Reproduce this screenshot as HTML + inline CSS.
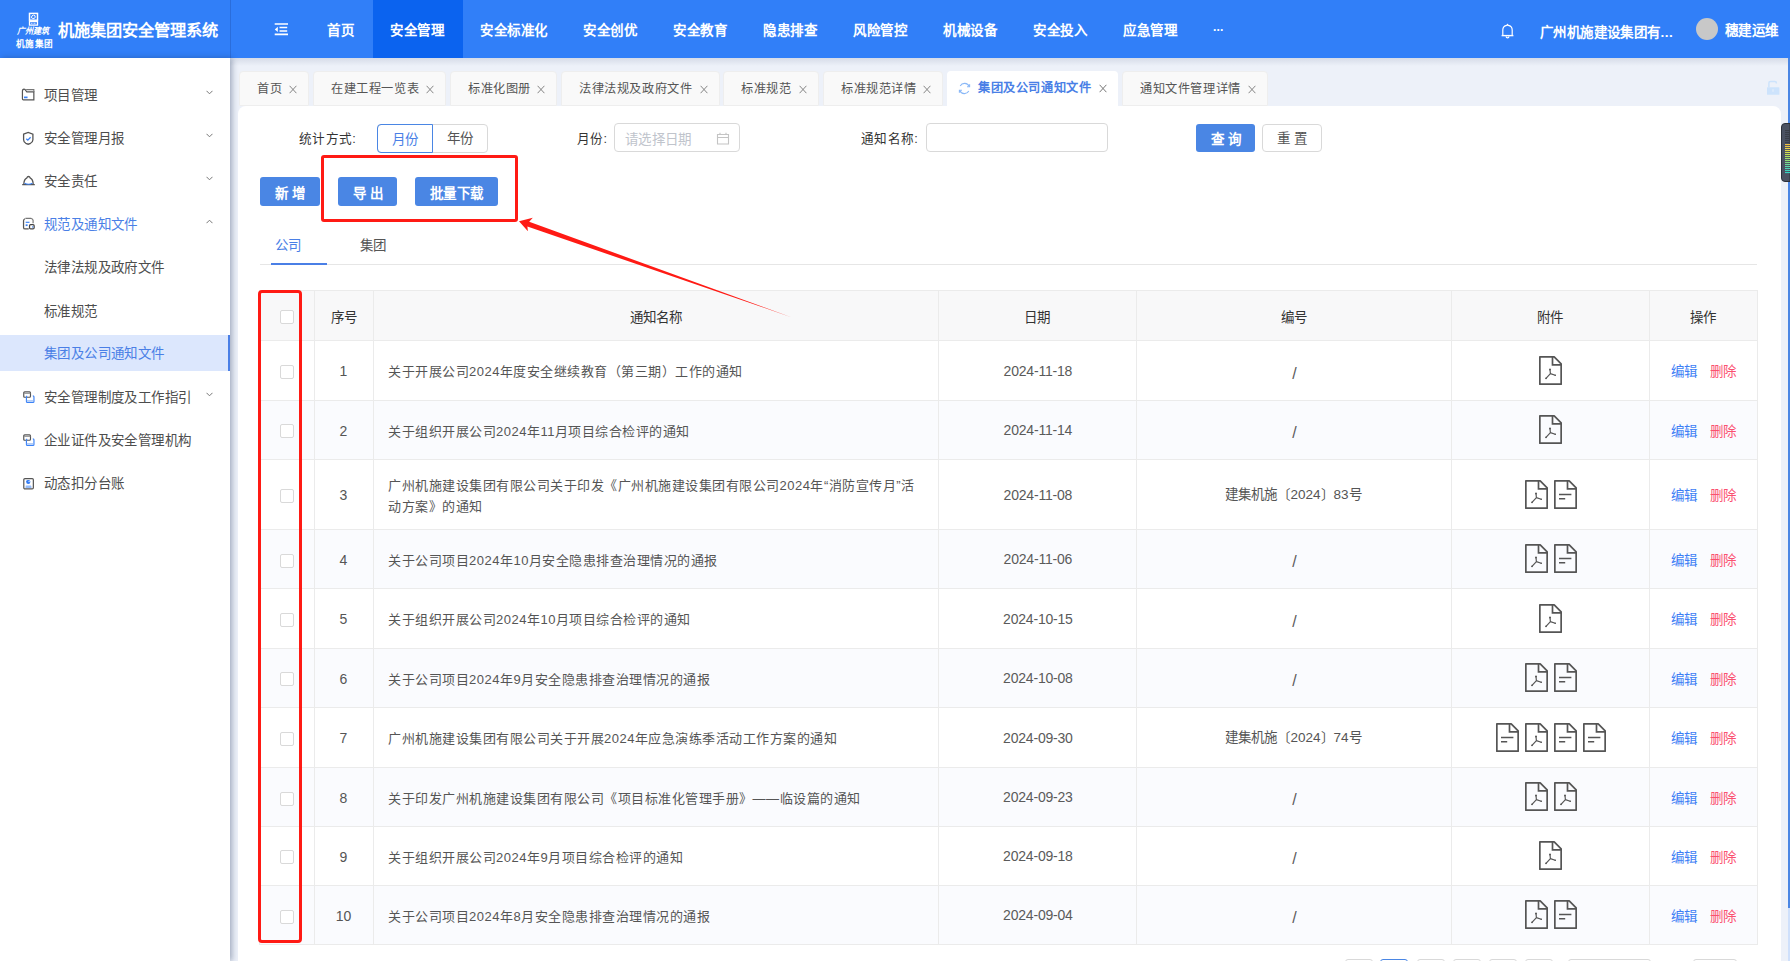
<!DOCTYPE html>
<html lang="zh-CN">
<head>
<meta charset="utf-8">
<style>
*{box-sizing:border-box;margin:0;padding:0}
html,body{width:1790px;height:961px;overflow:hidden;background:#edf1f9;font-family:"Liberation Sans",sans-serif;color:#333}
.abs{position:absolute}
#hdr{position:absolute;left:0;top:0;width:1790px;height:58px;background:#317ff8;color:#fff}
#logo{position:absolute;left:0;top:0;width:230px;height:58px}
#hdr .title{position:absolute;left:58px;top:17px;font-size:16.2px;font-weight:bold;line-height:26px;white-space:nowrap}
.nav{position:absolute;top:0;height:58px;line-height:62px;font-size:13.5px;font-weight:bold;white-space:nowrap}
.nav.act{background:#0d64f0}
#side{position:absolute;left:0;top:58px;width:230px;height:903px;background:#fff;box-shadow:2px 0 6px rgba(30,50,90,.38)}
.si{position:absolute;left:0;width:230px;height:36px;line-height:36px;font-size:13.5px;color:#4d4d4d;white-space:nowrap;letter-spacing:.4px}
.si .t{position:absolute;left:44px;top:1px}
.si svg{position:absolute}
.chev{position:absolute;left:206px;width:7px;height:5px}
.tab{position:absolute;top:71px;height:35px;background:#f9f9f9;border:1px solid #eeeeee;border-radius:4px 4px 0 0;font-size:12.2px;letter-spacing:.6px;color:#555;line-height:36px;white-space:nowrap}
.tab .t{position:absolute;left:17px;top:-1px}
.tab .x{position:absolute;right:11px;top:13px;width:8px;height:9px}
#card{position:absolute;left:238px;top:106px;width:1543px;height:900px;background:#fff;border-radius:8px}
.lbl{position:absolute;font-size:12.6px;color:#333;white-space:nowrap;line-height:22px;letter-spacing:.3px}
.btn{position:absolute;background:#4a86e4;color:#fff;border-radius:3px;font-size:13.5px;font-weight:bold;text-align:center;white-space:nowrap}
.th{position:absolute;font-size:13.5px;color:#333;white-space:nowrap;line-height:20px;text-align:center;font-weight:500}
.td{position:absolute;font-size:13.5px;color:#555;white-space:nowrap;line-height:20px;text-align:center}
.cb{position:absolute;width:14px;height:14px;border:1px solid #d9d9d9;border-radius:2px;background:#fff}
</style>
</head>
<body>
<div id="hdr">
  <div id="logo">
    <svg class="abs" style="left:28px;top:12px" width="11" height="14" viewBox="0 0 11 14"><rect x="1.5" y="1.4" width="8" height="6.8" fill="none" stroke="#fff" stroke-width="1.5"/><path d="M3.5 6.2Q3.2 3.2 5.6 3Q7.6 3 7.2 5.6Q6.4 6.8 4.2 6.4" fill="none" stroke="#fff" stroke-width="1"/><rect x="1.5" y="9.5" width="8" height="3.6" fill="none" stroke="#fff" stroke-width="1.3"/><path d="M3 11.3H8" stroke="#cfe0ff" stroke-width="1" stroke-dasharray="1 .5"/></svg>
    <div class="abs" style="left:17px;top:25.5px;font-size:8px;font-style:italic;font-weight:bold;line-height:12px;white-space:nowrap;transform:scaleY(1.1)">广州建筑</div>
    <div class="abs" style="left:16px;top:38px;font-size:8.6px;font-weight:bold;line-height:12px;letter-spacing:.4px;white-space:nowrap">机施集团</div>
    <div class="title">机施集团安全管理系统</div>
  </div>
  <div class="abs" style="left:230px;top:0;width:1px;height:58px;background:#2a6ddb"></div>
  <svg class="abs" style="left:274px;top:23px" width="15" height="13" viewBox="0 0 15 13"><path d="M.7 1H14M5.5 4.5H13.2M5.5 8H13.2M.7 11.4H14" stroke="#fff" stroke-width="1.6"/><path d="M3.8 3.8V9L.8 6.4Z" fill="#fff"/></svg>
  <svg class="abs" style="left:1501px;top:23px" width="13" height="16" viewBox="0 0 13 16"><path d="M6.5 1.3L7.2 2.3Q11.2 2.9 11.2 7V12.5H1.8V7Q1.8 2.9 5.8 2.3Z" fill="none" stroke="#fff" stroke-width="1.2" stroke-linejoin="round"/><path d="M.6 12.6H12.4" stroke="#fff" stroke-width="1.4"/><path d="M5 13.4Q5.2 14.9 6.6 14.9Q7.9 14.9 8 13.4" fill="none" stroke="#fff" stroke-width="1.1"/></svg>
  <div class="abs" style="left:373px;top:0;width:90px;height:58px;background:#0b63ef"></div>
  <div class="nav" style="left:327px;letter-spacing:.5px">首页</div>
  <div class="nav" style="left:390px;letter-spacing:.5px">安全管理</div>
  <div class="nav" style="left:480px;letter-spacing:.5px">安全标准化</div>
  <div class="nav" style="left:583px;letter-spacing:.5px">安全创优</div>
  <div class="nav" style="left:673px;letter-spacing:.5px">安全教育</div>
  <div class="nav" style="left:763px;letter-spacing:.5px">隐患排查</div>
  <div class="nav" style="left:853px;letter-spacing:.5px">风险管控</div>
  <div class="nav" style="left:943px;letter-spacing:.5px">机械设备</div>
  <div class="nav" style="left:1033px;letter-spacing:.5px">安全投入</div>
  <div class="nav" style="left:1123px;letter-spacing:.5px">应急管理</div>
  <div class="nav" style="left:1213px;font-size:12px;line-height:60px;letter-spacing:-.5px">···</div>
  <div class="abs" style="left:1540px;top:20px;letter-spacing:.4px;font-size:13.5px;font-weight:bold;line-height:26px;white-space:nowrap">广州机施建设集团有...</div>
  <div class="abs" style="left:1696px;top:18px;width:22px;height:22px;border-radius:50%;background:#c8c8c8"></div>
  <div class="abs" style="left:1725px;top:17.5px;letter-spacing:.4px;font-size:13.5px;font-weight:bold;line-height:26px;white-space:nowrap">穗建运维</div>
</div>
<div id="side">
  <div class="si" style="top:19px"><svg style="left:21.3px;top:11.4px" width="14" height="13" viewBox="0 0 15 14"><path d="M1.5 3.5Q1.5 1.2 3.2 1.2Q4.5 1.2 5.5 3.2L6.2 4.2H13.8V12.8H2.5Q1.5 12.8 1.5 11.5Z" fill="none" stroke="#555" stroke-width="1.3"/><path d="M5.5 1.8H13.8V4.2" fill="none" stroke="#777" stroke-width="1.2"/><rect x="3.2" y="9.2" width="3.8" height="1.8" fill="#3b82f6"/></svg><span class="t">项目管理</span><svg class="chev" style="top:13px" viewBox="0 0 7 5"><path d="M.5 .8L3.5 3.8L6.5 .8" fill="none" stroke="#777" stroke-width="1"/></svg></div>
  <div class="si" style="top:62px"><svg style="left:22px;top:11px" width="13" height="14" viewBox="0 0 13 14"><path d="M1.6 3.2L6.2 1.5L10.9 3.2V8.8Q10.9 11 8.5 12.3L6.2 13.2L3.8 12.3Q1.6 11 1.6 8.8Z" fill="none" stroke="#555" stroke-width="1.3"/><path d="M4.3 7.8L5.8 9.2L8.6 6.2" fill="none" stroke="#3b82f6" stroke-width="1.3"/></svg><span class="t">安全管理月报</span><svg class="chev" style="top:13px" viewBox="0 0 7 5"><path d="M.5 .8L3.5 3.8L6.5 .8" fill="none" stroke="#777" stroke-width="1"/></svg></div>
  <div class="si" style="top:105px"><svg style="left:21px;top:12px" width="15" height="12" viewBox="0 0 15 12"><path d="M1.2 9.6H13.8M2.8 9.4Q3 4.4 5.6 3.2Q6.4 1.5 7.5 1.5Q8.6 1.5 9.4 3.2Q12 4.4 12.2 9.4" fill="none" stroke="#555" stroke-width="1.3"/><path d="M3.6 8.3Q7.5 10.2 11.4 8.3" fill="none" stroke="#3b82f6" stroke-width="1.2"/></svg><span class="t">安全责任</span><svg class="chev" style="top:13px" viewBox="0 0 7 5"><path d="M.5 .8L3.5 3.8L6.5 .8" fill="none" stroke="#777" stroke-width="1"/></svg></div>
  <div class="si" style="top:148px;color:#4a7fe6"><svg style="left:22px;top:11px" width="13.5" height="13.5" viewBox="0 0 14 14"><path d="M3.2 1.8Q1.6 2.2 1.6 4V10.8Q1.6 12.4 3.2 12.4H7" fill="none" stroke="#555" stroke-width="1.3"/><path d="M3.5 1.5H9.5Q11.3 1.8 11.5 3.5V6.5" fill="none" stroke="#777" stroke-width="1.2"/><path d="M3.8 5.5H7.8" stroke="#3b82f6" stroke-width="1.2"/><rect x="3.8" y="7.6" width="2" height="1.8" fill="#3b82f6"/><rect x="7.8" y="7.8" width="4.8" height="4.6" rx="1.2" fill="#fff" stroke="#444" stroke-width="1.3"/><rect x="10.6" y="9.5" width="1" height="1.6" fill="#3b82f6"/></svg><span class="t">规范及通知文件</span><svg class="chev" style="top:13px" viewBox="0 0 7 5"><path d="M.5 4.2L3.5 1.2L6.5 4.2" fill="none" stroke="#777" stroke-width="1"/></svg></div>
  <div class="si" style="top:191px"><span class="t">法律法规及政府文件</span></div>
  <div class="si" style="top:235px"><span class="t">标准规范</span></div>
  <div class="si" style="top:277px;background:#dce7fd;color:#4a7fe6"><span class="t">集团及公司通知文件</span><div class="abs" style="left:228px;top:0;width:2px;height:36px;background:#4a7fe6"></div></div>
  <div class="si" style="top:321px"><svg style="left:22px;top:11px" width="13.5" height="13.5" viewBox="0 0 14 14"><path d="M1.8 6.5V3Q1.8 2 2.8 2H7.8Q8.8 2 8.8 3V6.5Q8.8 7.5 7.8 7.5H2.8Q1.8 7.5 1.8 6.5Z" fill="none" stroke="#555" stroke-width="1.2"/><path d="M2 3.6H8.6" stroke="#999" stroke-width="1"/><path d="M5.3 6.1Q4.6 6.6 4.6 7.8V11.9Q4.6 12.9 5.6 12.9H11.4Q12.4 12.9 12.4 11.9V7.1Q12.4 6.1 11.2 6.1" fill="none" stroke="#3b82f6" stroke-width="1.2"/><path d="M4.8 11.2H12.2" stroke="#8fb5f6" stroke-width="1"/></svg><span class="t">安全管理制度及工作指引</span><svg class="chev" style="top:13px" viewBox="0 0 7 5"><path d="M.5 .8L3.5 3.8L6.5 .8" fill="none" stroke="#777" stroke-width="1"/></svg></div>
  <div class="si" style="top:364px"><svg style="left:22px;top:11px" width="13.5" height="13.5" viewBox="0 0 14 14"><path d="M1.8 6.5V3Q1.8 2 2.8 2H7.8Q8.8 2 8.8 3V6.5Q8.8 7.5 7.8 7.5H2.8Q1.8 7.5 1.8 6.5Z" fill="none" stroke="#555" stroke-width="1.2"/><path d="M2 3.6H8.6" stroke="#999" stroke-width="1"/><path d="M5.3 6.1Q4.6 6.6 4.6 7.8V11.9Q4.6 12.9 5.6 12.9H11.4Q12.4 12.9 12.4 11.9V7.1Q12.4 6.1 11.2 6.1" fill="none" stroke="#3b82f6" stroke-width="1.2"/><path d="M4.8 11.2H12.2" stroke="#8fb5f6" stroke-width="1"/></svg><span class="t">企业证件及安全管理机构</span></div>
  <div class="si" style="top:407px"><svg style="left:22px;top:12px" width="12.5" height="13" viewBox="0 0 13 14"><rect x="1.7" y="1.7" width="10.3" height="11" rx="1.2" fill="none" stroke="#555" stroke-width="1.3"/><path d="M4.2 4.8Q4.2 3.2 6.6 3.2Q8.8 3.2 8.8 5.2Q8.8 7.6 6.6 7.6Q4.2 7.6 4.2 4.8Z" fill="#2f7af5"/><circle cx="7.4" cy="4.9" r=".7" fill="#fff"/><path d="M3.8 9.1H9.5" stroke="#b9d3fb" stroke-width=".9"/><path d="M4 10.8H9.5" stroke="#2f7af5" stroke-width="1.1" stroke-linecap="round"/></svg><span class="t">动态扣分台账</span></div>
</div>
<div class="abs" style="left:230px;top:58px;width:1560px;height:8px;background:linear-gradient(rgba(60,80,120,.13),rgba(60,80,120,0))"></div>
<div class="tab" style="left:239px;width:70px"><span class="t">首页</span><svg class="x" viewBox="0 0 8 9"><path d="M.6 .8L7.4 8.2M7.4 .8L.6 8.2" stroke="#808080" stroke-width=".95"/></svg></div>
<div class="tab" style="left:313px;width:133px"><span class="t">在建工程一览表</span><svg class="x" viewBox="0 0 8 9"><path d="M.6 .8L7.4 8.2M7.4 .8L.6 8.2" stroke="#808080" stroke-width=".95"/></svg></div>
<div class="tab" style="left:450px;width:107px"><span class="t">标准化图册</span><svg class="x" viewBox="0 0 8 9"><path d="M.6 .8L7.4 8.2M7.4 .8L.6 8.2" stroke="#808080" stroke-width=".95"/></svg></div>
<div class="tab" style="left:561px;width:159px"><span class="t">法律法规及政府文件</span><svg class="x" viewBox="0 0 8 9"><path d="M.6 .8L7.4 8.2M7.4 .8L.6 8.2" stroke="#808080" stroke-width=".95"/></svg></div>
<div class="tab" style="left:723px;width:96px"><span class="t">标准规范</span><svg class="x" viewBox="0 0 8 9"><path d="M.6 .8L7.4 8.2M7.4 .8L.6 8.2" stroke="#808080" stroke-width=".95"/></svg></div>
<div class="tab" style="left:823px;width:120px"><span class="t">标准规范详情</span><svg class="x" viewBox="0 0 8 9"><path d="M.6 .8L7.4 8.2M7.4 .8L.6 8.2" stroke="#808080" stroke-width=".95"/></svg></div>
<div class="tab" style="left:947px;width:171px;background:#fff;height:40px;border:0;color:#4a7fe6;font-weight:bold"><svg class="abs" style="left:11px;top:11px" width="13" height="13" viewBox="0 0 13 13"><path d="M11.2 4.5A5 5 0 0 0 2.2 4M1.8 8.5A5 5 0 0 0 10.8 9" fill="none" stroke="#8ab8f7" stroke-width="1.1"/><path d="M11.6 2.2V4.8H9" fill="none" stroke="#8ab8f7" stroke-width="1.1"/><path d="M1.4 10.8V8.2H4" fill="none" stroke="#8ab8f7" stroke-width="1.1"/></svg><span class="t" style="left:31px">集团及公司通知文件</span><svg class="x" viewBox="0 0 8 9"><path d="M.6 .8L7.4 8.2M7.4 .8L.6 8.2" stroke="#777" stroke-width="1"/></svg></div>
<div class="tab" style="left:1122px;width:146px"><span class="t">通知文件管理详情</span><svg class="x" viewBox="0 0 8 9"><path d="M.6 .8L7.4 8.2M7.4 .8L.6 8.2" stroke="#808080" stroke-width=".95"/></svg></div>
<svg class="abs" style="left:1766px;top:79px" width="15" height="17" viewBox="0 0 15 17"><path d="M2.9 8.2V4Q2.9 2.6 4.4 2.6H8.9Q10.4 2.6 10.4 4V4.6" fill="none" stroke="#cde3fc" stroke-width="1.5"/><rect x="1" y="8.2" width="12.4" height="7.6" rx=".6" fill="#cde3fc"/><rect x="6.4" y="10.2" width="1.2" height="2.6" fill="#e4eefb"/></svg>
<div class="abs" style="left:1788px;top:58px;width:2px;height:903px;background:#cfe0fb"></div><div class="abs" style="left:1788px;top:58px;width:2px;height:850px;background:#4a86e4"></div>
<svg class="abs" style="left:1781px;top:123px" width="9" height="59" viewBox="0 0 9 59"><path d="M9 .5H4Q.5 .5 .5 4V55Q.5 58.5 4 58.5H9Z" fill="#4b5262" stroke="#2c313b" stroke-width="1"/><rect x="4" y="7" width="5" height="1.1" fill="#3a3f48"/><rect x="4" y="9" width="5" height="1.1" fill="#3a3f48"/><rect x="4" y="11" width="5" height="1.1" fill="#3a3f48"/><rect x="4" y="13" width="5" height="1.1" fill="#3a3f48"/><rect x="4" y="15" width="5" height="1.1" fill="#3a3f48"/><rect x="4" y="17" width="5" height="1.1" fill="#3a3f48"/><rect x="4" y="19" width="5" height="1.1" fill="#3a3f48"/><rect x="4" y="21" width="5" height="1.1" fill="#f0c040"/><rect x="4" y="23" width="5" height="1.1" fill="#eec845"/><rect x="4" y="25" width="5" height="1.1" fill="#e8d048"/><rect x="4" y="27" width="5" height="1.1" fill="#e0d84c"/><rect x="4" y="29" width="5" height="1.1" fill="#d4de50"/><rect x="4" y="31" width="5" height="1.1" fill="#c4e055"/><rect x="4" y="33" width="5" height="1.1" fill="#b0e060"/><rect x="4" y="35" width="5" height="1.1" fill="#9ede6c"/><rect x="4" y="37" width="5" height="1.1" fill="#8ede78"/><rect x="4" y="39" width="5" height="1.1" fill="#7edc88"/><rect x="4" y="41" width="5" height="1.1" fill="#6cda98"/><rect x="4" y="43" width="5" height="1.1" fill="#5cd8a8"/><rect x="4" y="45" width="5" height="1.1" fill="#4cd6b4"/><rect x="4" y="47" width="5" height="1.1" fill="#40d4bc"/><rect x="4" y="49" width="5" height="1.1" fill="#38d2c2"/></svg>
<div id="card"></div>
<div class="lbl" style="left:299px;top:128px">统计方式:</div>
<div class="abs" style="left:377px;top:124px;width:111px;height:29px;border:1px solid #d9d9d9;border-radius:4px"></div>
<div class="abs" style="left:377px;top:124px;width:56px;height:29px;border:1px solid #4a86e4;border-radius:4px 0 0 4px;color:#4a7fe6;font-size:13.5px;line-height:30px;text-align:center">月份</div>
<div class="abs" style="left:433px;top:124px;width:55px;height:29px;color:#555;font-size:13.5px;line-height:30px;text-align:center;text-indent:-2px">年份</div>
<div class="lbl" style="left:577px;top:128px">月份:</div>
<div class="abs" style="left:614px;top:123px;width:126px;height:29px;border:1px solid #d9d9d9;border-radius:4px"></div>
<div class="abs" style="left:625px;top:129.5px;letter-spacing:.3px;font-size:13.5px;color:#c0c4cc;line-height:20px;white-space:nowrap">请选择日期</div>
<svg class="abs" style="left:716px;top:132px" width="14" height="13" viewBox="0 0 14 13"><path d="M1.5 2.5H12.5V12H1.5ZM1.5 5.5H12.5M4 .8V3M10 .8V3" fill="none" stroke="#c4c4c4" stroke-width="1.1"/></svg>
<div class="lbl" style="left:861px;top:128px">通知名称:</div>
<div class="abs" style="left:926px;top:123px;width:182px;height:29px;border:1px solid #d9d9d9;border-radius:4px"></div>
<div class="btn" style="left:1196px;top:124px;width:59px;height:28px;line-height:31px;letter-spacing:4px;text-indent:4px">查询</div>
<div class="abs" style="left:1262px;top:124px;width:60px;height:28px;line-height:28px;border:1px solid #d9d9d9;border-radius:4px;font-size:13.5px;color:#555;text-align:center;letter-spacing:4px;text-indent:4px">重置</div>
<div class="btn" style="left:260px;top:177px;width:60px;height:29px;line-height:33px;letter-spacing:4px;text-indent:4px">新增</div>
<div class="btn" style="left:338px;top:177px;width:59px;height:29px;line-height:33px;letter-spacing:4px;text-indent:4px">导出</div>
<div class="btn" style="left:415px;top:177px;width:83px;height:29px;line-height:33px;letter-spacing:.5px;text-indent:.5px">批量下载</div>
<div class="abs" style="left:275px;top:236px;font-size:13.5px;color:#4a7fe6;line-height:20px">公司</div>
<div class="abs" style="left:360px;top:236px;font-size:13.5px;color:#555;line-height:20px">集团</div>
<div class="abs" style="left:260px;top:264px;width:1497px;height:1px;background:#e6e6e6"></div>
<div class="abs" style="left:271px;top:263px;width:56px;height:2px;background:#4a7fe6"></div>

<!--TABLE-->
<div class="abs" style="left:259px;top:290px;width:1498px;height:50px;background:#f8f8f9"></div>
<div class="abs" style="left:259px;top:400px;width:1498px;height:59px;background:#fafbfe"></div>
<div class="abs" style="left:259px;top:529px;width:1498px;height:59px;background:#fafbfe"></div>
<div class="abs" style="left:259px;top:648px;width:1498px;height:59px;background:#fafbfe"></div>
<div class="abs" style="left:259px;top:767px;width:1498px;height:59px;background:#fafbfe"></div>
<div class="abs" style="left:259px;top:885px;width:1498px;height:59px;background:#fafbfe"></div>
<div class="abs" style="left:259px;top:290px;width:1498px;height:1px;background:#ebebeb"></div>
<div class="abs" style="left:259px;top:340px;width:1498px;height:1px;background:#ebebeb"></div>
<div class="abs" style="left:259px;top:400px;width:1498px;height:1px;background:#ebebeb"></div>
<div class="abs" style="left:259px;top:459px;width:1498px;height:1px;background:#ebebeb"></div>
<div class="abs" style="left:259px;top:529px;width:1498px;height:1px;background:#ebebeb"></div>
<div class="abs" style="left:259px;top:588px;width:1498px;height:1px;background:#ebebeb"></div>
<div class="abs" style="left:259px;top:648px;width:1498px;height:1px;background:#ebebeb"></div>
<div class="abs" style="left:259px;top:707px;width:1498px;height:1px;background:#ebebeb"></div>
<div class="abs" style="left:259px;top:767px;width:1498px;height:1px;background:#ebebeb"></div>
<div class="abs" style="left:259px;top:826px;width:1498px;height:1px;background:#ebebeb"></div>
<div class="abs" style="left:259px;top:885px;width:1498px;height:1px;background:#ebebeb"></div>
<div class="abs" style="left:259px;top:944px;width:1498px;height:1px;background:#ebebeb"></div>
<div class="abs" style="left:259px;top:290px;width:1px;height:655px;background:#ebebeb"></div>
<div class="abs" style="left:314px;top:290px;width:1px;height:655px;background:#ebebeb"></div>
<div class="abs" style="left:373px;top:290px;width:1px;height:655px;background:#ebebeb"></div>
<div class="abs" style="left:938px;top:290px;width:1px;height:655px;background:#ebebeb"></div>
<div class="abs" style="left:1136px;top:290px;width:1px;height:655px;background:#ebebeb"></div>
<div class="abs" style="left:1451px;top:290px;width:1px;height:655px;background:#ebebeb"></div>
<div class="abs" style="left:1649px;top:290px;width:1px;height:655px;background:#ebebeb"></div>
<div class="abs" style="left:1757px;top:290px;width:1px;height:655px;background:#ebebeb"></div>
<div class="cb" style="left:280px;top:310px"></div>
<div class="th" style="left:314px;width:59px;top:308.0px">序号</div>
<div class="th" style="left:373px;width:565px;top:308.0px">通知名称</div>
<div class="th" style="left:938px;width:198px;top:308.0px">日期</div>
<div class="th" style="left:1136px;width:315px;top:308.0px">编号</div>
<div class="th" style="left:1451px;width:198px;top:308.0px">附件</div>
<div class="th" style="left:1649px;width:108px;top:308.0px">操作</div>
<div class="cb" style="left:280px;top:365px"></div>
<div class="td" style="left:314px;width:59px;top:361.0px;font-size:14px;letter-spacing:-.2px;text-indent:-.2px">1</div>
<div class="td" style="left:388px;text-align:left;top:362.0px;font-size:13px;letter-spacing:.5px">关于开展公司2024年度安全继续教育（第三期）工作的通知</div>
<div class="td" style="left:939px;width:198px;color:#5a5a5a;top:360.5px;font-size:14px;letter-spacing:-.2px;text-indent:-.2px">2024-11-18</div>
<div class="td" style="left:1137px;width:315px;top:362.5px;font-size:16px;line-height:22px;color:#5a5a5a">/</div>
<div class="abs" style="left:1538.8px;top:355.5px;width:23px;height:29px"><svg width="23" height="29" viewBox="0 0 23 29"><path d="M.85 .85H15.2L22.15 7.8V28.15H.85Z" fill="none" stroke="#555" stroke-width="1.7" stroke-linejoin="round"/><path d="M13.5 .85V8.9H22.15" fill="none" stroke="#555" stroke-width="1.7"/><path d="M11 13.6L11.4 17.6L7 22.4M11.4 17.6L16.2 19.3" fill="none" stroke="#555" stroke-width="1.15" stroke-linecap="round" stroke-linejoin="round"/><circle cx="11" cy="13.5" r=".95" fill="#555"/><circle cx="16.2" cy="19.3" r=".8" fill="#555"/><circle cx="7" cy="22.4" r=".8" fill="#555"/></svg></div>
<div class="td" style="left:1671px;text-align:left;top:362.0px;color:#3d7ef5">编辑</div>
<div class="td" style="left:1710px;text-align:left;top:362.0px;color:#fb5070">删除</div>
<div class="cb" style="left:280px;top:424px"></div>
<div class="td" style="left:314px;width:59px;top:420.5px;font-size:14px;letter-spacing:-.2px;text-indent:-.2px">2</div>
<div class="td" style="left:388px;text-align:left;top:421.5px;font-size:13px;letter-spacing:.5px">关于组织开展公司2024年11月项目综合检评的通知</div>
<div class="td" style="left:939px;width:198px;color:#5a5a5a;top:420.0px;font-size:14px;letter-spacing:-.2px;text-indent:-.2px">2024-11-14</div>
<div class="td" style="left:1137px;width:315px;top:422.0px;font-size:16px;line-height:22px;color:#5a5a5a">/</div>
<div class="abs" style="left:1538.8px;top:415.0px;width:23px;height:29px"><svg width="23" height="29" viewBox="0 0 23 29"><path d="M.85 .85H15.2L22.15 7.8V28.15H.85Z" fill="none" stroke="#555" stroke-width="1.7" stroke-linejoin="round"/><path d="M13.5 .85V8.9H22.15" fill="none" stroke="#555" stroke-width="1.7"/><path d="M11 13.6L11.4 17.6L7 22.4M11.4 17.6L16.2 19.3" fill="none" stroke="#555" stroke-width="1.15" stroke-linecap="round" stroke-linejoin="round"/><circle cx="11" cy="13.5" r=".95" fill="#555"/><circle cx="16.2" cy="19.3" r=".8" fill="#555"/><circle cx="7" cy="22.4" r=".8" fill="#555"/></svg></div>
<div class="td" style="left:1671px;text-align:left;top:421.5px;color:#3d7ef5">编辑</div>
<div class="td" style="left:1710px;text-align:left;top:421.5px;color:#fb5070">删除</div>
<div class="cb" style="left:280px;top:489px"></div>
<div class="td" style="left:314px;width:59px;top:485.0px;font-size:14px;letter-spacing:-.2px;text-indent:-.2px">3</div>
<div class="td" style="left:388px;text-align:left;top:475.0px;line-height:21px;font-size:13px;letter-spacing:.5px">广州机施建设集团有限公司关于印发《广州机施建设集团有限公司2024年“消防宣传月”活<br>动方案》的通知</div>
<div class="td" style="left:939px;width:198px;color:#5a5a5a;top:484.5px;font-size:14px;letter-spacing:-.2px;text-indent:-.2px">2024-11-08</div>
<div class="td" style="left:1136px;width:315px;top:485.0px">建集机施〔2024〕83号</div>
<div class="abs" style="left:1525.0px;top:479.5px;width:23px;height:29px"><svg width="23" height="29" viewBox="0 0 23 29"><path d="M.85 .85H15.2L22.15 7.8V28.15H.85Z" fill="none" stroke="#555" stroke-width="1.7" stroke-linejoin="round"/><path d="M13.5 .85V8.9H22.15" fill="none" stroke="#555" stroke-width="1.7"/><path d="M11 13.6L11.4 17.6L7 22.4M11.4 17.6L16.2 19.3" fill="none" stroke="#555" stroke-width="1.15" stroke-linecap="round" stroke-linejoin="round"/><circle cx="11" cy="13.5" r=".95" fill="#555"/><circle cx="16.2" cy="19.3" r=".8" fill="#555"/><circle cx="7" cy="22.4" r=".8" fill="#555"/></svg></div>
<div class="abs" style="left:1554.0px;top:479.5px;width:23px;height:29px"><svg width="23" height="29" viewBox="0 0 23 29"><path d="M.85 .85H15.2L22.15 7.8V28.15H.85Z" fill="none" stroke="#555" stroke-width="1.7" stroke-linejoin="round"/><path d="M13.5 .85V8.9H22.15" fill="none" stroke="#555" stroke-width="1.7"/><path d="M5 14.4H17.4M5 18.8H11.2" fill="none" stroke="#555" stroke-width="1.5"/></svg></div>
<div class="td" style="left:1671px;text-align:left;top:486.0px;color:#3d7ef5">编辑</div>
<div class="td" style="left:1710px;text-align:left;top:486.0px;color:#fb5070">删除</div>
<div class="cb" style="left:280px;top:554px"></div>
<div class="td" style="left:314px;width:59px;top:549.5px;font-size:14px;letter-spacing:-.2px;text-indent:-.2px">4</div>
<div class="td" style="left:388px;text-align:left;top:550.5px;font-size:13px;letter-spacing:.5px">关于公司项目2024年10月安全隐患排查治理情况的通报</div>
<div class="td" style="left:939px;width:198px;color:#5a5a5a;top:549.0px;font-size:14px;letter-spacing:-.2px;text-indent:-.2px">2024-11-06</div>
<div class="td" style="left:1137px;width:315px;top:551.0px;font-size:16px;line-height:22px;color:#5a5a5a">/</div>
<div class="abs" style="left:1525.0px;top:544.0px;width:23px;height:29px"><svg width="23" height="29" viewBox="0 0 23 29"><path d="M.85 .85H15.2L22.15 7.8V28.15H.85Z" fill="none" stroke="#555" stroke-width="1.7" stroke-linejoin="round"/><path d="M13.5 .85V8.9H22.15" fill="none" stroke="#555" stroke-width="1.7"/><path d="M11 13.6L11.4 17.6L7 22.4M11.4 17.6L16.2 19.3" fill="none" stroke="#555" stroke-width="1.15" stroke-linecap="round" stroke-linejoin="round"/><circle cx="11" cy="13.5" r=".95" fill="#555"/><circle cx="16.2" cy="19.3" r=".8" fill="#555"/><circle cx="7" cy="22.4" r=".8" fill="#555"/></svg></div>
<div class="abs" style="left:1554.0px;top:544.0px;width:23px;height:29px"><svg width="23" height="29" viewBox="0 0 23 29"><path d="M.85 .85H15.2L22.15 7.8V28.15H.85Z" fill="none" stroke="#555" stroke-width="1.7" stroke-linejoin="round"/><path d="M13.5 .85V8.9H22.15" fill="none" stroke="#555" stroke-width="1.7"/><path d="M5 14.4H17.4M5 18.8H11.2" fill="none" stroke="#555" stroke-width="1.5"/></svg></div>
<div class="td" style="left:1671px;text-align:left;top:550.5px;color:#3d7ef5">编辑</div>
<div class="td" style="left:1710px;text-align:left;top:550.5px;color:#fb5070">删除</div>
<div class="cb" style="left:280px;top:613px"></div>
<div class="td" style="left:314px;width:59px;top:609.0px;font-size:14px;letter-spacing:-.2px;text-indent:-.2px">5</div>
<div class="td" style="left:388px;text-align:left;top:610.0px;font-size:13px;letter-spacing:.5px">关于组织开展公司2024年10月项目综合检评的通知</div>
<div class="td" style="left:939px;width:198px;color:#5a5a5a;top:608.5px;font-size:14px;letter-spacing:-.2px;text-indent:-.2px">2024-10-15</div>
<div class="td" style="left:1137px;width:315px;top:610.5px;font-size:16px;line-height:22px;color:#5a5a5a">/</div>
<div class="abs" style="left:1538.8px;top:603.5px;width:23px;height:29px"><svg width="23" height="29" viewBox="0 0 23 29"><path d="M.85 .85H15.2L22.15 7.8V28.15H.85Z" fill="none" stroke="#555" stroke-width="1.7" stroke-linejoin="round"/><path d="M13.5 .85V8.9H22.15" fill="none" stroke="#555" stroke-width="1.7"/><path d="M11 13.6L11.4 17.6L7 22.4M11.4 17.6L16.2 19.3" fill="none" stroke="#555" stroke-width="1.15" stroke-linecap="round" stroke-linejoin="round"/><circle cx="11" cy="13.5" r=".95" fill="#555"/><circle cx="16.2" cy="19.3" r=".8" fill="#555"/><circle cx="7" cy="22.4" r=".8" fill="#555"/></svg></div>
<div class="td" style="left:1671px;text-align:left;top:610.0px;color:#3d7ef5">编辑</div>
<div class="td" style="left:1710px;text-align:left;top:610.0px;color:#fb5070">删除</div>
<div class="cb" style="left:280px;top:672px"></div>
<div class="td" style="left:314px;width:59px;top:668.5px;font-size:14px;letter-spacing:-.2px;text-indent:-.2px">6</div>
<div class="td" style="left:388px;text-align:left;top:669.5px;font-size:13px;letter-spacing:.5px">关于公司项目2024年9月安全隐患排查治理情况的通报</div>
<div class="td" style="left:939px;width:198px;color:#5a5a5a;top:668.0px;font-size:14px;letter-spacing:-.2px;text-indent:-.2px">2024-10-08</div>
<div class="td" style="left:1137px;width:315px;top:670.0px;font-size:16px;line-height:22px;color:#5a5a5a">/</div>
<div class="abs" style="left:1525.0px;top:663.0px;width:23px;height:29px"><svg width="23" height="29" viewBox="0 0 23 29"><path d="M.85 .85H15.2L22.15 7.8V28.15H.85Z" fill="none" stroke="#555" stroke-width="1.7" stroke-linejoin="round"/><path d="M13.5 .85V8.9H22.15" fill="none" stroke="#555" stroke-width="1.7"/><path d="M11 13.6L11.4 17.6L7 22.4M11.4 17.6L16.2 19.3" fill="none" stroke="#555" stroke-width="1.15" stroke-linecap="round" stroke-linejoin="round"/><circle cx="11" cy="13.5" r=".95" fill="#555"/><circle cx="16.2" cy="19.3" r=".8" fill="#555"/><circle cx="7" cy="22.4" r=".8" fill="#555"/></svg></div>
<div class="abs" style="left:1554.0px;top:663.0px;width:23px;height:29px"><svg width="23" height="29" viewBox="0 0 23 29"><path d="M.85 .85H15.2L22.15 7.8V28.15H.85Z" fill="none" stroke="#555" stroke-width="1.7" stroke-linejoin="round"/><path d="M13.5 .85V8.9H22.15" fill="none" stroke="#555" stroke-width="1.7"/><path d="M5 14.4H17.4M5 18.8H11.2" fill="none" stroke="#555" stroke-width="1.5"/></svg></div>
<div class="td" style="left:1671px;text-align:left;top:669.5px;color:#3d7ef5">编辑</div>
<div class="td" style="left:1710px;text-align:left;top:669.5px;color:#fb5070">删除</div>
<div class="cb" style="left:280px;top:732px"></div>
<div class="td" style="left:314px;width:59px;top:728.0px;font-size:14px;letter-spacing:-.2px;text-indent:-.2px">7</div>
<div class="td" style="left:388px;text-align:left;top:729.0px;font-size:13px;letter-spacing:.5px">广州机施建设集团有限公司关于开展2024年应急演练季活动工作方案的通知</div>
<div class="td" style="left:939px;width:198px;color:#5a5a5a;top:727.5px;font-size:14px;letter-spacing:-.2px;text-indent:-.2px">2024-09-30</div>
<div class="td" style="left:1136px;width:315px;top:728.0px">建集机施〔2024〕74号</div>
<div class="abs" style="left:1496.0px;top:722.5px;width:23px;height:29px"><svg width="23" height="29" viewBox="0 0 23 29"><path d="M.85 .85H15.2L22.15 7.8V28.15H.85Z" fill="none" stroke="#555" stroke-width="1.7" stroke-linejoin="round"/><path d="M13.5 .85V8.9H22.15" fill="none" stroke="#555" stroke-width="1.7"/><path d="M5 14.4H17.4M5 18.8H11.2" fill="none" stroke="#555" stroke-width="1.5"/></svg></div>
<div class="abs" style="left:1525.0px;top:722.5px;width:23px;height:29px"><svg width="23" height="29" viewBox="0 0 23 29"><path d="M.85 .85H15.2L22.15 7.8V28.15H.85Z" fill="none" stroke="#555" stroke-width="1.7" stroke-linejoin="round"/><path d="M13.5 .85V8.9H22.15" fill="none" stroke="#555" stroke-width="1.7"/><path d="M11 13.6L11.4 17.6L7 22.4M11.4 17.6L16.2 19.3" fill="none" stroke="#555" stroke-width="1.15" stroke-linecap="round" stroke-linejoin="round"/><circle cx="11" cy="13.5" r=".95" fill="#555"/><circle cx="16.2" cy="19.3" r=".8" fill="#555"/><circle cx="7" cy="22.4" r=".8" fill="#555"/></svg></div>
<div class="abs" style="left:1554.0px;top:722.5px;width:23px;height:29px"><svg width="23" height="29" viewBox="0 0 23 29"><path d="M.85 .85H15.2L22.15 7.8V28.15H.85Z" fill="none" stroke="#555" stroke-width="1.7" stroke-linejoin="round"/><path d="M13.5 .85V8.9H22.15" fill="none" stroke="#555" stroke-width="1.7"/><path d="M5 14.4H17.4M5 18.8H11.2" fill="none" stroke="#555" stroke-width="1.5"/></svg></div>
<div class="abs" style="left:1583.0px;top:722.5px;width:23px;height:29px"><svg width="23" height="29" viewBox="0 0 23 29"><path d="M.85 .85H15.2L22.15 7.8V28.15H.85Z" fill="none" stroke="#555" stroke-width="1.7" stroke-linejoin="round"/><path d="M13.5 .85V8.9H22.15" fill="none" stroke="#555" stroke-width="1.7"/><path d="M5 14.4H17.4M5 18.8H11.2" fill="none" stroke="#555" stroke-width="1.5"/></svg></div>
<div class="td" style="left:1671px;text-align:left;top:729.0px;color:#3d7ef5">编辑</div>
<div class="td" style="left:1710px;text-align:left;top:729.0px;color:#fb5070">删除</div>
<div class="cb" style="left:280px;top:792px"></div>
<div class="td" style="left:314px;width:59px;top:787.5px;font-size:14px;letter-spacing:-.2px;text-indent:-.2px">8</div>
<div class="td" style="left:388px;text-align:left;top:788.5px;font-size:13px;letter-spacing:.5px">关于印发广州机施建设集团有限公司《项目标准化管理手册》——临设篇的通知</div>
<div class="td" style="left:939px;width:198px;color:#5a5a5a;top:787.0px;font-size:14px;letter-spacing:-.2px;text-indent:-.2px">2024-09-23</div>
<div class="td" style="left:1137px;width:315px;top:789.0px;font-size:16px;line-height:22px;color:#5a5a5a">/</div>
<div class="abs" style="left:1525.0px;top:782.0px;width:23px;height:29px"><svg width="23" height="29" viewBox="0 0 23 29"><path d="M.85 .85H15.2L22.15 7.8V28.15H.85Z" fill="none" stroke="#555" stroke-width="1.7" stroke-linejoin="round"/><path d="M13.5 .85V8.9H22.15" fill="none" stroke="#555" stroke-width="1.7"/><path d="M11 13.6L11.4 17.6L7 22.4M11.4 17.6L16.2 19.3" fill="none" stroke="#555" stroke-width="1.15" stroke-linecap="round" stroke-linejoin="round"/><circle cx="11" cy="13.5" r=".95" fill="#555"/><circle cx="16.2" cy="19.3" r=".8" fill="#555"/><circle cx="7" cy="22.4" r=".8" fill="#555"/></svg></div>
<div class="abs" style="left:1554.0px;top:782.0px;width:23px;height:29px"><svg width="23" height="29" viewBox="0 0 23 29"><path d="M.85 .85H15.2L22.15 7.8V28.15H.85Z" fill="none" stroke="#555" stroke-width="1.7" stroke-linejoin="round"/><path d="M13.5 .85V8.9H22.15" fill="none" stroke="#555" stroke-width="1.7"/><path d="M11 13.6L11.4 17.6L7 22.4M11.4 17.6L16.2 19.3" fill="none" stroke="#555" stroke-width="1.15" stroke-linecap="round" stroke-linejoin="round"/><circle cx="11" cy="13.5" r=".95" fill="#555"/><circle cx="16.2" cy="19.3" r=".8" fill="#555"/><circle cx="7" cy="22.4" r=".8" fill="#555"/></svg></div>
<div class="td" style="left:1671px;text-align:left;top:788.5px;color:#3d7ef5">编辑</div>
<div class="td" style="left:1710px;text-align:left;top:788.5px;color:#fb5070">删除</div>
<div class="cb" style="left:280px;top:850px"></div>
<div class="td" style="left:314px;width:59px;top:846.5px;font-size:14px;letter-spacing:-.2px;text-indent:-.2px">9</div>
<div class="td" style="left:388px;text-align:left;top:847.5px;font-size:13px;letter-spacing:.5px">关于组织开展公司2024年9月项目综合检评的通知</div>
<div class="td" style="left:939px;width:198px;color:#5a5a5a;top:846.0px;font-size:14px;letter-spacing:-.2px;text-indent:-.2px">2024-09-18</div>
<div class="td" style="left:1137px;width:315px;top:848.0px;font-size:16px;line-height:22px;color:#5a5a5a">/</div>
<div class="abs" style="left:1538.8px;top:841.0px;width:23px;height:29px"><svg width="23" height="29" viewBox="0 0 23 29"><path d="M.85 .85H15.2L22.15 7.8V28.15H.85Z" fill="none" stroke="#555" stroke-width="1.7" stroke-linejoin="round"/><path d="M13.5 .85V8.9H22.15" fill="none" stroke="#555" stroke-width="1.7"/><path d="M11 13.6L11.4 17.6L7 22.4M11.4 17.6L16.2 19.3" fill="none" stroke="#555" stroke-width="1.15" stroke-linecap="round" stroke-linejoin="round"/><circle cx="11" cy="13.5" r=".95" fill="#555"/><circle cx="16.2" cy="19.3" r=".8" fill="#555"/><circle cx="7" cy="22.4" r=".8" fill="#555"/></svg></div>
<div class="td" style="left:1671px;text-align:left;top:847.5px;color:#3d7ef5">编辑</div>
<div class="td" style="left:1710px;text-align:left;top:847.5px;color:#fb5070">删除</div>
<div class="cb" style="left:280px;top:910px"></div>
<div class="td" style="left:314px;width:59px;top:905.5px;font-size:14px;letter-spacing:-.2px;text-indent:-.2px">10</div>
<div class="td" style="left:388px;text-align:left;top:906.5px;font-size:13px;letter-spacing:.5px">关于公司项目2024年8月安全隐患排查治理情况的通报</div>
<div class="td" style="left:939px;width:198px;color:#5a5a5a;top:905.0px;font-size:14px;letter-spacing:-.2px;text-indent:-.2px">2024-09-04</div>
<div class="td" style="left:1137px;width:315px;top:907.0px;font-size:16px;line-height:22px;color:#5a5a5a">/</div>
<div class="abs" style="left:1525.0px;top:900.0px;width:23px;height:29px"><svg width="23" height="29" viewBox="0 0 23 29"><path d="M.85 .85H15.2L22.15 7.8V28.15H.85Z" fill="none" stroke="#555" stroke-width="1.7" stroke-linejoin="round"/><path d="M13.5 .85V8.9H22.15" fill="none" stroke="#555" stroke-width="1.7"/><path d="M11 13.6L11.4 17.6L7 22.4M11.4 17.6L16.2 19.3" fill="none" stroke="#555" stroke-width="1.15" stroke-linecap="round" stroke-linejoin="round"/><circle cx="11" cy="13.5" r=".95" fill="#555"/><circle cx="16.2" cy="19.3" r=".8" fill="#555"/><circle cx="7" cy="22.4" r=".8" fill="#555"/></svg></div>
<div class="abs" style="left:1554.0px;top:900.0px;width:23px;height:29px"><svg width="23" height="29" viewBox="0 0 23 29"><path d="M.85 .85H15.2L22.15 7.8V28.15H.85Z" fill="none" stroke="#555" stroke-width="1.7" stroke-linejoin="round"/><path d="M13.5 .85V8.9H22.15" fill="none" stroke="#555" stroke-width="1.7"/><path d="M5 14.4H17.4M5 18.8H11.2" fill="none" stroke="#555" stroke-width="1.5"/></svg></div>
<div class="td" style="left:1671px;text-align:left;top:906.5px;color:#3d7ef5">编辑</div>
<div class="td" style="left:1710px;text-align:left;top:906.5px;color:#fb5070">删除</div>
<!--/TABLE-->
<!--OVER-->
<div class="abs" style="left:320.5px;top:154.5px;width:197px;height:67px;border:3px solid #ff1a14;border-radius:3px"></div>
<div class="abs" style="left:258px;top:290px;width:44px;height:653px;border:3px solid #ff1a14;border-radius:4px"></div>
<svg class="abs" style="left:0;top:0" width="1790" height="961" viewBox="0 0 1790 961"><path d="M519 221.2L532.8 217.8L529.2 221.8L792 317.4L527.4 226.6L527.9 231.3Z" fill="#ff1a14"/></svg>
<div class="abs" style="left:1345px;top:959px;width:28px;height:20px;border:1px solid #d9d9d9;border-radius:3px"></div>
<div class="abs" style="left:1380px;top:958.5px;width:28px;height:20px;border:1.5px solid #4a86e4;border-radius:3px"></div>
<div class="abs" style="left:1417px;top:959px;width:28px;height:20px;border:1px solid #d9d9d9;border-radius:3px"></div>
<div class="abs" style="left:1453px;top:959px;width:28px;height:20px;border:1px solid #d9d9d9;border-radius:3px"></div>
<div class="abs" style="left:1489px;top:959px;width:28px;height:20px;border:1px solid #d9d9d9;border-radius:3px"></div>
<div class="abs" style="left:1525px;top:959px;width:28px;height:20px;border:1px solid #d9d9d9;border-radius:3px"></div>
<div class="abs" style="left:1568px;top:959px;width:83px;height:20px;border:1px solid #d9d9d9;border-radius:3px"></div>
<div class="abs" style="left:1693px;top:959px;width:44px;height:20px;border:1px solid #d9d9d9;border-radius:3px"></div>
<!--/OVER-->
</body>
</html>
